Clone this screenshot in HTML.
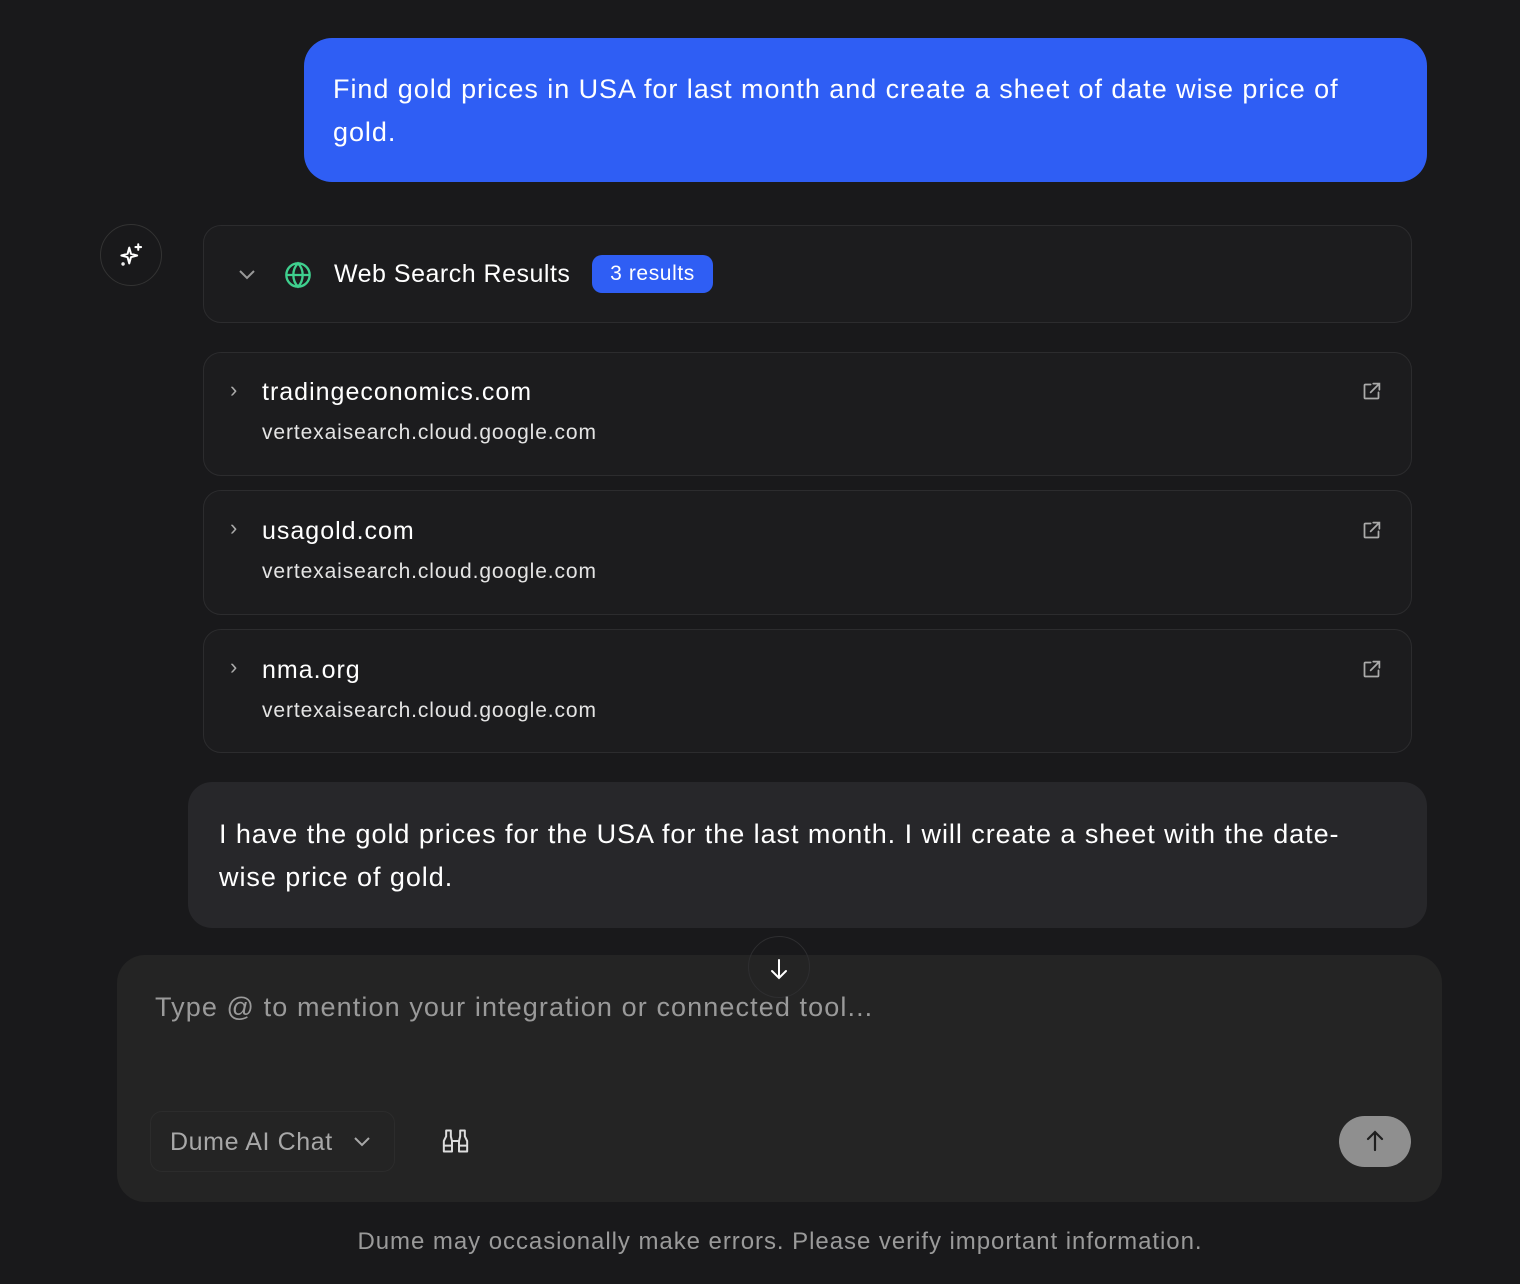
<!DOCTYPE html>
<html><head><meta charset="utf-8"><style>
*{margin:0;padding:0;box-sizing:border-box}
body{width:1520px;height:1284px;background:#19191b;font-family:"Liberation Sans",sans-serif;color:#fff;position:relative;overflow:hidden}
.a{position:absolute}
.user{left:304px;top:38px;width:1123px;height:144px;background:#2f5ef4;border-radius:28px;padding:30px 29px;font-size:27px;line-height:43px;letter-spacing:0.95px;white-space:nowrap}
.av{left:100px;top:224px;width:62px;height:62px;border:1px solid #333;border-radius:50%}
.card{left:203px;width:1209px;background:#1c1c1e;border:1px solid #2c2c2e;border-radius:18px}
.hdr{top:225px;height:98px}
.t{font-size:25px;color:#fff;letter-spacing:1px}
.s{font-size:21px;color:#e4e4e4;letter-spacing:0.9px}
.badge{left:592px;top:255px;width:121px;height:38px;background:#2f5ef4;border-radius:10px;font-size:21px;text-align:center;line-height:38px;letter-spacing:0.6px}
.asst{left:188px;top:782px;width:1239px;height:146px;background:#27272a;border-radius:24px;padding:31px 31px;font-size:27px;line-height:43px;letter-spacing:0.95px;white-space:nowrap}
.inp{left:117px;top:955px;width:1325px;height:247px;background:#242424;border-radius:28px}
</style></head><body>
<div class="a user">Find gold prices in USA for last month and create a sheet of date wise price of<br>gold.</div>
<div class="a av"><svg class="a" style="left:17px;top:17px" width="27" height="27" viewBox="0 0 24 24" fill="none" stroke="#fff" stroke-width="1.8" stroke-linejoin="round" stroke-linecap="round"><path d="M10 5 L11.5 10.5 L17 12 L11.5 13.5 L10 19 L8.5 13.5 L3 12 L8.5 10.5Z"/><path d="M18 2v5M15.5 4.5h5"/><circle cx="4.5" cy="19.5" r=".6"/></svg></div>
<div class="a card hdr"></div>
<svg class="a" style="left:237px;top:266px" width="20" height="16" viewBox="0 0 20 16" fill="none" stroke="#999" stroke-width="2"><path d="M3 5l7 7 7-7"/></svg>
<svg class="a" style="left:284px;top:261px" width="28" height="28" viewBox="0 0 24 24" fill="none" stroke="#3fcf8e" stroke-width="2"><circle cx="12" cy="12" r="10"/><path d="M2 12h20M12 2c3 3 4 6.5 4 10s-1 7-4 10c-3-3-4-6.5-4-10s1-7 4-10z"/></svg>
<div class="a t" style="left:334px;top:260px;letter-spacing:0.5px">Web Search Results</div>
<div class="a badge">3 results</div>

<div class="a card" style="top:352px;height:124px"></div>
<div class="a card" style="top:490px;height:125px"></div>
<div class="a card" style="top:629px;height:124px"></div>

<div class="a" style="left:230px;top:377px;color:#aaa;font-size:22px">›</div>
<div class="a t" style="left:262px;top:378px">tradingeconomics.com</div>
<div class="a s" style="left:262px;top:421px">vertexaisearch.cloud.google.com</div>
<div class="a" style="left:230px;top:515px;color:#aaa;font-size:22px">›</div>
<div class="a t" style="left:262px;top:517px">usagold.com</div>
<div class="a s" style="left:262px;top:560px">vertexaisearch.cloud.google.com</div>
<div class="a" style="left:230px;top:654px;color:#aaa;font-size:22px">›</div>
<div class="a t" style="left:262px;top:656px">nma.org</div>
<div class="a s" style="left:262px;top:699px">vertexaisearch.cloud.google.com</div>

<svg class="a" style="left:1361px;top:381px" width="21" height="21" viewBox="0 0 24 24" fill="none" stroke="#aaa" stroke-width="2" stroke-linecap="round"><path d="M11 4H5a1 1 0 0 0-1 1v14a1 1 0 0 0 1 1h14a1 1 0 0 0 1-1v-6M14 3h7v7M21 3l-10 10"/></svg>
<svg class="a" style="left:1361px;top:520px" width="21" height="21" viewBox="0 0 24 24" fill="none" stroke="#aaa" stroke-width="2" stroke-linecap="round"><path d="M11 4H5a1 1 0 0 0-1 1v14a1 1 0 0 0 1 1h14a1 1 0 0 0 1-1v-6M14 3h7v7M21 3l-10 10"/></svg>
<svg class="a" style="left:1361px;top:659px" width="21" height="21" viewBox="0 0 24 24" fill="none" stroke="#aaa" stroke-width="2" stroke-linecap="round"><path d="M11 4H5a1 1 0 0 0-1 1v14a1 1 0 0 0 1 1h14a1 1 0 0 0 1-1v-6M14 3h7v7M21 3l-10 10"/></svg>

<div class="a asst">I have the gold prices for the USA for the last month. I will create a sheet with the date-<br>wise price of gold.</div>

<div class="a inp"></div>
<div class="a" style="left:748px;top:936px;width:62px;height:62px;border-radius:50%;border:1px solid #2e2e30;background:transparent"></div>
<svg class="a" style="left:767px;top:957px" width="24" height="24" viewBox="0 0 24 24" fill="none" stroke="#fff" stroke-width="2" stroke-linecap="round"><path d="M12 3v18M5 14l7 7 7-7"/></svg>
<div class="a" style="left:155px;top:992px;font-size:27px;color:#9a9a9a;letter-spacing:1.1px;white-space:nowrap">Type @ to mention your integration or connected tool...</div>
<div class="a" style="left:150px;top:1111px;width:245px;height:61px;border:1px solid #2c2c2c;border-radius:12px"></div>
<div class="a" style="left:170px;top:1128px;font-size:25px;color:#a8a8a8;letter-spacing:0.6px">Dume AI Chat</div>
<svg class="a" style="left:352px;top:1134px" width="20" height="16" viewBox="0 0 20 16" fill="none" stroke="#a8a8a8" stroke-width="2"><path d="M3 4l7 7 7-7"/></svg>
<svg class="a" style="left:441px;top:1127px" width="29" height="28" viewBox="0 0 24 24" fill="none" stroke="#ddd" stroke-width="1.7" stroke-linejoin="round"><path d="M4 3h4v5l1 4v9H2v-9l2-4zM16 3h4v5l2 4v9h-7v-9l1-4z"/><path d="M2 16h7M15 16h7M9 12h6"/></svg>
<div class="a" style="left:1339px;top:1116px;width:72px;height:51px;border-radius:26px;background:#8f8f8f"></div>
<svg class="a" style="left:1363px;top:1129px" width="24" height="24" viewBox="0 0 24 24" fill="none" stroke="#1f1f1f" stroke-width="2.2" stroke-linecap="round"><path d="M12 21V3M5 10l7-7 7 7"/></svg>
<div class="a" style="left:0;width:1560px;top:1228px;text-align:center;font-size:24px;color:#9a9a9a;letter-spacing:0.95px;white-space:nowrap">Dume may occasionally make errors. Please verify important information.</div>
</body></html>
